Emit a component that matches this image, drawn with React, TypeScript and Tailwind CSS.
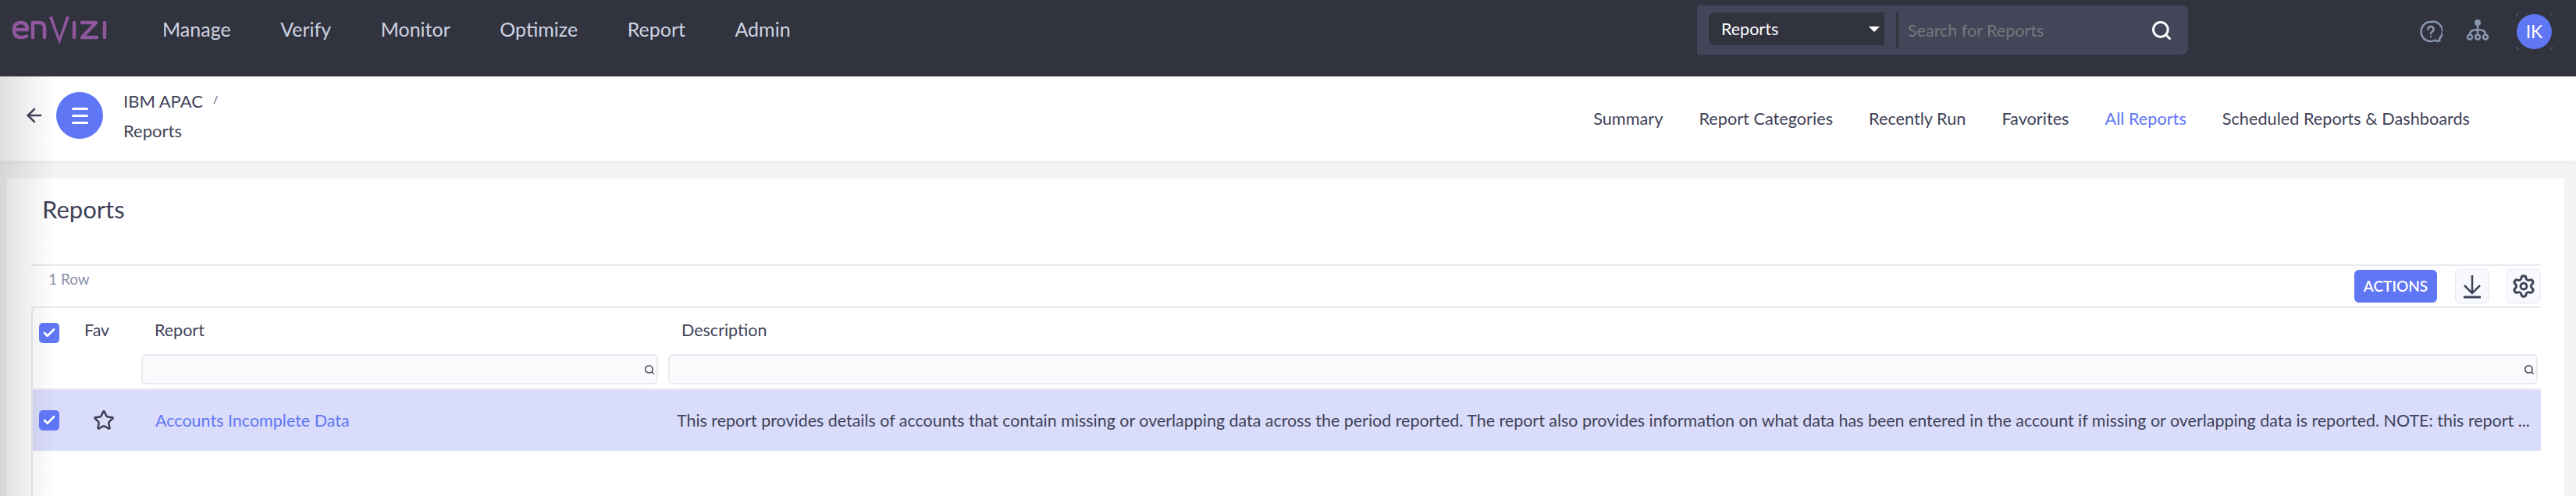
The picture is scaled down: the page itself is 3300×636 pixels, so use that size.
import { ArrowLeft, Check, Settings, Star, Search } from "lucide-react";

const font = { fontFamily: 'Lato, "Noto Sans", sans-serif' };

function Logo() {
  return (
    <svg width="122" height="38" viewBox="0 0 122 38" fill="none" stroke="#8f579c" strokeWidth="4.500" strokeLinecap="round" strokeLinejoin="round">
      <path d="M3 18h17c0-6-3-9-8.500-9S3 12 3 18.500 6.500 28 12 28c3 0 5-.5 7-1.500" />
      <path d="M27 28V9h8c5 0 7 3 7 7v12" />
      <path d="M48 2l4-1 9 27 9-27 4 1-13 35z" fill="#8f579c" stroke="none" />
      <path d="M80 9v19" />
      <path d="M90 9h18L90 28h19" />
      <path d="M119 9v19" />
    </svg>
  );
}

function Checkbox() {
  return (
    <span className="relative z-10 flex h-[26px] w-[26px] items-center justify-center rounded-[5px] bg-[#5f76f5]">
      <Check size={18} strokeWidth={3.500} className="text-white" />
    </span>
  );
}

function HelpIcon() {
  return (
    <svg width="30" height="30" viewBox="0 0 30 30" fill="none" stroke="#8a96ad" strokeWidth="2.500">
      <path d="M15 2a12.500 12.500 0 1 0 6 23.500l3 1.500c2.500 0 3-2 2-3.500A12.500 12.500 0 0 0 15 2z" />
      <path d="M11.500 11.500a3.500 3.500 0 1 1 5 3.200c-1 .6-1.500 1.300-1.500 2.300" strokeLinecap="round" />
      <circle cx="15" cy="21" r="1.200" fill="#8a96ad" stroke="none" />
    </svg>
  );
}

function OrgIcon() {
  return (
    <svg width="30" height="30" viewBox="0 0 30 30" fill="none" stroke="#8a96ad" strokeWidth="2.500">
      <circle cx="15" cy="5" r="4" fill="#8a96ad" stroke="none" />
      <path d="M15 8v13M5 21v-1c0-4 4-6 10-6s10 2 10 6v1" />
      <circle cx="5" cy="23.500" r="3" />
      <circle cx="15" cy="23.500" r="3" />
      <circle cx="25" cy="23.500" r="3" />
    </svg>
  );
}

function Avatar() {
  return (
    <div className="relative flex h-[45px] w-[45px] items-center justify-center rounded-full bg-[#5f76f5] text-[23px] text-white">
      IK
      <svg className="absolute -left-[3px] -top-[3px]" width="51" height="51" viewBox="0 0 51 51" fill="none" stroke="#6b6e7c">
        <path d="M2 6q1-3 4-4M45 2q3 1 4 4M49 45q-1 3-4 4M6 49q-3-1-4-4" />
      </svg>
    </div>
  );
}

const mainNav = ["Manage", "Verify", "Monitor", "Optimize", "Report", "Admin"];
const subNav = ["Summary", "Report Categories", "Recently Run", "Favorites", "All Reports", "Scheduled Reports & Dashboards"];

export default function App() {
  return (
    <div style={font} className="relative flex h-[636px] w-[3300px] flex-col overflow-hidden bg-[#f2f3f5] text-[21.5px] text-[#3f4257]">
      {/* top bar */}
      <header className="flex h-[98px] shrink-0 items-start bg-[#31333f] pl-[15px]">
        <div className="mt-[20px]">
          <Logo />
        </div>
        <nav className="ml-[71px] mt-[20px] flex gap-[63.500px] text-[25px] leading-[34px] text-[#ced3e2]">
          {mainNav.map((item) => (
            <a key={item}>{item}</a>
          ))}
        </nav>

        <div className="absolute left-[2174px] top-[7px] flex h-[63px] w-[629px] items-start rounded-r-[8px] bg-[#434658] pl-[15px] pr-[20px] pt-[9px]">
          <div className="flex h-[42px] w-[225px] items-center justify-between rounded-l-[8px] bg-[#31333f] pl-[16px] pr-[6px] text-white">
            <span>Reports</span>
            <span className="h-0 w-0 border-x-[7px] border-t-[7px] border-x-transparent border-t-white" />
          </div>
          <span className="ml-[15px] h-[45px] w-[3px] bg-[#31333f]" />
          <span className="ml-[12px] mt-[10px] leading-[26px] text-[#76777c]">Search for Reports</span>
          <Search size={28} strokeWidth={2.500} className="ml-auto mt-[9px] text-white" />
        </div>

        <div className="absolute left-[3099px] top-[26px]">
          <HelpIcon />
        </div>
        <div className="absolute left-[3159px] top-[24px]">
          <OrgIcon />
        </div>
        <div className="absolute left-[3224px] top-[18px]">
          <Avatar />
        </div>
      </header>

      {/* breadcrumb and section tabs */}
      <div className="flex h-[108px] shrink-0 items-start bg-white pl-[30px] pr-[136px] shadow-[0_3px_8px_rgba(0,0,0,0.03)]">
        <ArrowLeft size={28} strokeWidth={2.200} className="relative z-10 mt-[36px]" />
        <div className="relative z-10 ml-[14px] mt-[20px] flex h-[60px] w-[60px] items-center justify-center rounded-full bg-[#5f76f5]">
          <span className="flex w-[21px] flex-col gap-[6px]">
            <span className="h-[3px] rounded bg-white" />
            <span className="h-[3px] rounded bg-white" />
            <span className="h-[3px] rounded bg-white" />
          </span>
        </div>
        <div className="ml-[26px] mt-[17px] text-[22px] leading-[30px]">
          <div className="flex">
            <span>IBM APAC</span>
            <span className="ml-[13px] -mt-[2px] text-[14px]">/</span>
          </div>
          <div className="mt-[8px]">Reports</div>
        </div>
        <nav className="ml-auto mt-[39px] flex gap-[46px] text-[21.700px] leading-[30px]">
          {subNav.map((item) => (
            <a key={item} className={item === "All Reports" ? "text-[#5f76f5]" : ""}>
              {item}
            </a>
          ))}
        </nav>
      </div>

      {/* report panel */}
      <div className="ml-[9px] mr-[15px] mt-[23px] flex-1 bg-white pl-[31px] pr-[30px]">
        <h1 className="ml-[14px] pt-[18px] text-[31px] leading-[42px]">Reports</h1>

        <div className="mt-[50px] flex h-[56px] items-start border-y-2 border-[#e9eaf3] pl-[22px]">
          <span className="mt-[4px] text-[19px] leading-[26px] text-[#8a92a8]">1 Row</span>
          <button className="ml-auto mt-[5px] h-[42px] w-[106px] rounded-[6px] bg-[#5f76f5] text-[19px] font-semibold text-white">
            ACTIONS
          </button>
          <span className="ml-[23px] mt-[4px] flex h-[44px] w-[44px] items-center justify-center rounded-[6px] border border-[#e6e8f2] bg-[#f8f9fe]">
            <svg width="24" height="32" viewBox="0 0 24 32" fill="none" stroke="#3f4257" strokeWidth="2.500">
              <path d="M12 2v22M2 15l10 10 10-10" />
              <path d="M1 30h22" strokeWidth="3" />
            </svg>
          </span>
          <span className="ml-[22px] mt-[4px] flex h-[44px] w-[44px] items-center justify-center rounded-[6px] border border-[#e6e8f2] bg-[#f8f9fe]">
            <Settings size={32} strokeWidth={2.200} />
          </span>
        </div>

        {/* table */}
        <div className="h-full rounded-tl-[6px] border-l-2 border-[#e9eaf3]">
          <div className="grid h-[59px] grid-cols-[58px_98px_675px_1fr] items-center pb-[3px]">
            <span className="ml-[8px] mt-[7px]">
              <Checkbox />
            </span>
            <span className="ml-[8px]">Fav</span>
            <span>Report</span>
            <span>Description</span>
          </div>
          <div className="flex h-[46px] items-start border-b-2 border-[#e9eaf3] pl-[139px] pr-[4px]">
            <div className="flex h-[39px] w-[662px] items-center justify-end rounded-[6px] border-2 border-[#e9eaf3] bg-[#fbfbfe] pr-[2px]">
              <Search size={14} strokeWidth={2.500} />
            </div>
            <div className="ml-[13px] flex h-[39px] flex-1 items-center justify-end rounded-[6px] border-2 border-[#e9eaf3] bg-[#fbfbfe] pr-[2px]">
              <Search size={14} strokeWidth={2.500} />
            </div>
          </div>
          <div className="grid h-[78px] grid-cols-[58px_98px_669px_1fr] items-center bg-[#d9dcfa]">
            <span className="ml-[8px]">
              <Checkbox />
            </span>
            <span className="ml-[19px]">
              <Star size={28} strokeWidth={2.200} />
            </span>
            <a className="ml-[1px] text-[#5f76f5]">Accounts Incomplete Data</a>
            <p className="whitespace-nowrap text-[21.450px]">
              This report provides details of accounts that contain missing or overlapping data across the period reported. The report also provides information on what data has been entered in the account if missing or overlapping data is reported. NOTE: this report ...
            </p>
          </div>
        </div>
      </div>

      {/* soft shadow running down the left edge */}
      <div className="pointer-events-none absolute bottom-0 left-0 top-[98px] w-[70px] bg-[linear-gradient(90deg,rgba(0,0,0,0.12),rgba(0,0,0,0))]" />
    </div>
  );
}
